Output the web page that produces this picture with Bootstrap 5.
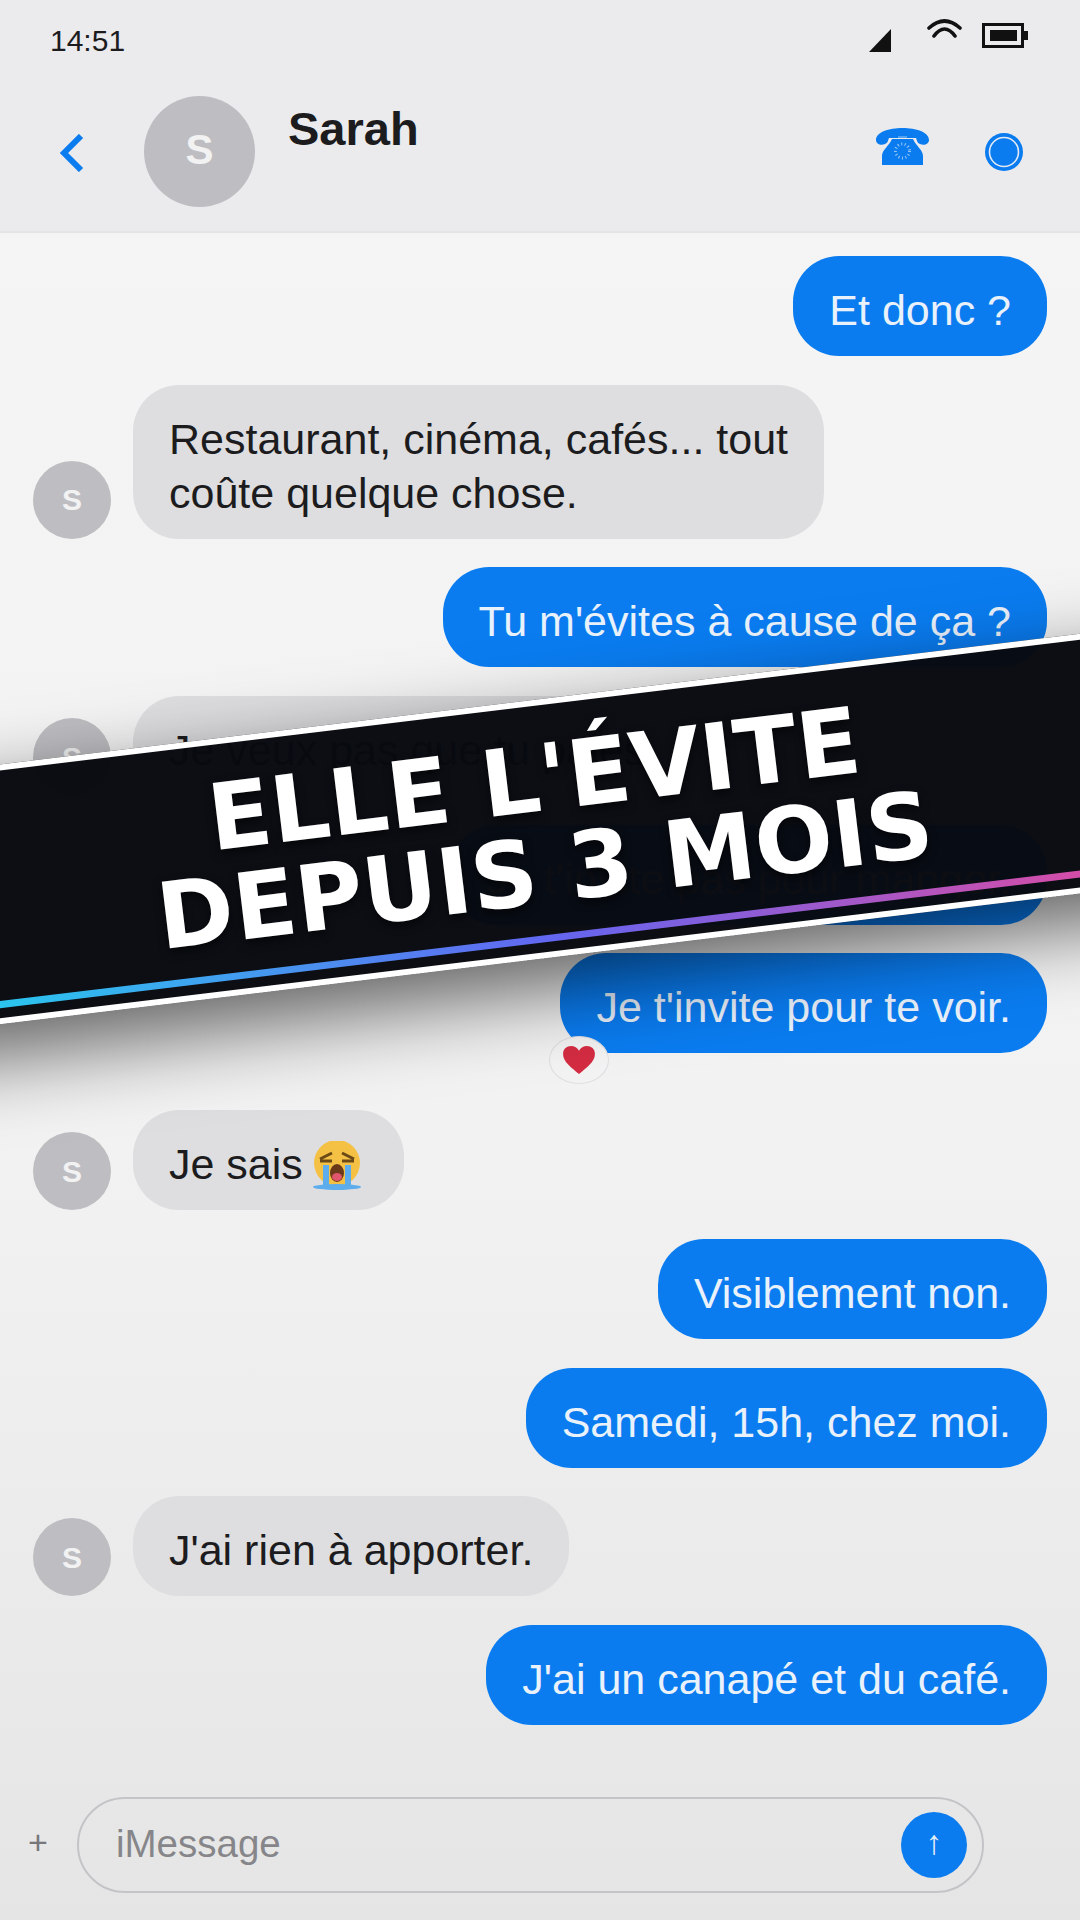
<!DOCTYPE html>
<html lang="fr">
<head>
  <meta charset="UTF-8">
  <title>Sarah</title>
  <link href="https://cdn.jsdelivr.net/npm/bootstrap@5.3.2/dist/css/bootstrap.min.css" rel="stylesheet">
  <style>
    html, body { width: 1080px; height: 1920px; overflow: hidden; }
    body { font-family: "Liberation Sans", Arial, sans-serif; color: #1c1c1e; background: #f2f2f3; }
    #phone { width: 1080px; height: 1920px; position: relative; overflow: hidden; background: linear-gradient(180deg, #f5f5f6 0%, #f2f2f2 60%, #e5e5e5 100%); }
    #top-area { height: 233px; background: #ebebed; border-bottom: 2px solid #e4e4e6; }
    #status-bar { height: 80px; padding: 0 52px 0 50px; }
    #clock { font-size: 30px; }
    .status-icons { align-self: flex-start; padding-top: 18px; }
    #sig-icon { margin-top: 11px; margin-right: 36px; }
    #wifi-icon { margin-right: 20px; }
    #batt-icon { margin-top: 5px; }
    #chat-head { height: 151px; padding: 0 57px 0 58px; }
    #back-btn { width: 86px; margin-bottom: 5px; flex: 0 0 auto; }
    #head-avatar { width: 111px; height: 111px; font-size: 42px; margin-right: 33px; margin-bottom: 9px; padding-bottom: 3px; }
    #head-name { font-size: 47px; font-weight: 700; margin-bottom: 52px; }
    #call-icon { margin-bottom: 18px; }
    #video-icon { margin-left: 55px; margin-bottom: 7px; }
    .face-round { border-radius: 50%; background: #bebec2; color: #f2f2f3; font-weight: 700; flex: 0 0 auto; }
    #chat-list { padding: 23px 33px 0 33px; gap: 28.7px; }
    .msg-bubble { font-size: 43px; line-height: 54px; padding: 27px 36px 19px; border-radius: 46px; position: relative; }
    .msg-out { background: #0a7cf0; color: #e9f1fb; margin-left: auto; margin-right: 0; }
    .msg-in { background: #dedee0; color: #1c1c1e; }
    .msg-row { gap: 22px; align-items: flex-end; }
    .msg-row .face-round { width: 78px; height: 78px; font-size: 30px; }
    .msg-gap { margin-top: 28px; }
    #heart-tag { position: absolute; left: -11px; bottom: -31px; width: 60px; height: 48px; border-radius: 50%; background: #f3f3f3; border: 1px solid #dfdfe3; }
    #cry-face { vertical-align: -12px; margin-left: -3px; margin-right: 6px; }
    #input-bar { position: absolute; left: 0; right: 0; bottom: 27px; height: 96px; padding: 0 96px 0 28px; }
    #plus-sign { font-size: 34px; color: #77777b; width: 49px; margin-bottom: 6px; }
    #input-box { height: 96px; flex: 1; border: 2px solid #c4c4c8; border-radius: 48px; padding: 0 15px 0 37px; font-size: 38.5px; color: #86868a; }
    #input-box span { margin-bottom: 3px; }
    #send-btn { width: 66px; height: 66px; border-radius: 50%; background: #0a7cf0; color: #e8eef6; font-size: 34px; line-height: 1; padding-bottom: 6px; }
    #banner { position: absolute; left: -100px; top: 700px; width: 1280px; height: 258px; transform: rotate(-6.9deg); background: rgba(8, 10, 16, .985); border-top: 6px solid #fff; border-bottom: 6px solid #fff; box-shadow: 0 30px 80px rgba(0, 0, 0, .6); }
    #banner-text { font-family: "DejaVu Sans", sans-serif; font-weight: 700; font-size: 92px; line-height: 92px; color: #fff; text-shadow: 0 4px 10px rgba(0, 0, 0, .6); height: 229px; padding-top: 10px; }
    #banner-line { height: 7px; background: linear-gradient(90deg, #22d3ee, #6366f1, #ec4899); }
  </style>
</head>
<body>
<div id="phone">
  <div id="top-area">
    <div id="status-bar" class="d-flex align-items-center justify-content-between">
      <div id="clock">14:51</div>
      <div class="status-icons d-flex align-items-start">
        <svg id="sig-icon" width="22" height="23" viewBox="0 0 22 23"><path d="M22 0V23H0Z" fill="#111"/></svg>
        <svg id="wifi-icon" width="35" height="20" viewBox="0 0 35 20" fill="none" stroke="#111" stroke-width="3.600" stroke-linecap="round"><path d="M2 10Q17.500 -4 33 10"/><path d="M7 18Q17.500 4 28 18"/></svg>
        <svg id="batt-icon" width="46" height="25" viewBox="0 0 46 25" fill="#111"><rect x="1.500" y="1.500" width="39" height="22" fill="none" stroke="#111" stroke-width="3"/><rect x="8" y="7" width="27" height="11"/><rect x="42" y="8" width="4" height="9"/></svg>
      </div>
    </div>
    <div id="chat-head" class="d-flex align-items-center">
      <div id="back-btn">
        <svg width="26" height="38" viewBox="0 0 26 38" fill="none" stroke="#0a7cf0" stroke-width="6"><path d="M23 2L6 19L23 36"/></svg>
      </div>
      <div id="head-avatar" class="face-round d-flex align-items-center justify-content-center">S</div>
      <div id="head-name">Sarah</div>
      <svg id="call-icon" class="ms-auto" width="55" height="37" viewBox="0 0 55 37">
        <path d="M1 12C1 4 14 0 27.500 0C41 0 54 4 54 12C54 16 49 18 45 16C42 15 42 12 41 10H14C13 12 13 15 10 16C6 18 1 16 1 12Z" fill="#0a7cf0"/>
        <path d="M7 37V28C7 22 14 18 17 11H38C41 18 48 22 48 28V37Z" fill="#0a7cf0"/>
        <circle cx="27.500" cy="23" r="7" fill="none" stroke="#9cc8f5" stroke-width="3" stroke-dasharray="1 2.500"/>
        <path d="M23 9H32" stroke="#9cc8f5" stroke-width="1"/>
      </svg>
      <svg id="video-icon" width="38" height="38" viewBox="0 0 38 38">
        <circle cx="19" cy="19" r="19" fill="#0a7cf0"/>
        <circle cx="19" cy="19" r="14.500" fill="#0a7cf0" stroke="#e3e9f2" stroke-width="1.600"/>
      </svg>
    </div>
  </div>

  <div id="chat-list" class="d-flex flex-column">
    <div class="msg-bubble msg-out">Et donc ?</div>
    <div class="msg-row d-flex">
      <div class="face-round d-flex align-items-center justify-content-center">S</div>
      <div class="msg-bubble msg-in">Restaurant, cinéma, cafés... tout<br>coûte quelque chose.</div>
    </div>
    <div class="msg-bubble msg-out">Tu m'évites à cause de ça ?</div>
    <div class="msg-row d-flex">
      <div class="face-round d-flex align-items-center justify-content-center">S</div>
      <div class="msg-bubble msg-in">Je veux pas que tu paies.</div>
    </div>
    <div class="msg-bubble msg-out">Je t'invite pas pour manger.</div>
    <div class="msg-bubble msg-out">Je t'invite pour te voir.
      <div id="heart-tag" class="d-flex align-items-center justify-content-center">
        <svg width="34" height="30" viewBox="0 0 36 32"><path d="M18 31C10 24 1 18 1 9.500C1 4 5 1 9.500 1C13 1 16.500 3 18 6C19.500 3 23 1 26.500 1C31 1 35 4 35 9.500C35 18 26 24 18 31Z" fill="#d42c42"/></svg>
      </div>
    </div>
    <div class="msg-row msg-gap d-flex">
      <div class="face-round d-flex align-items-center justify-content-center">S</div>
      <div class="msg-bubble msg-in">Je sais
        <svg id="cry-face" width="50" height="50" viewBox="0 0 50 50">
          <circle cx="25" cy="22" r="23" fill="#f4c144"/>
          <path d="M8 18L20 12M8 20H20M42 18L30 12M42 20H30" stroke="#6b4a18" stroke-width="3" fill="none"/>
          <rect x="11" y="24" width="6" height="22" fill="#5dadec"/>
          <rect x="33" y="24" width="6" height="22" fill="#5dadec"/>
          <ellipse cx="25" cy="32" rx="7" ry="9" fill="#6b3a18"/>
          <ellipse cx="25" cy="36" rx="5" ry="4" fill="#e0566c"/>
          <ellipse cx="25" cy="46" rx="24" ry="3" fill="#5dadec"/>
        </svg>
      </div>
    </div>
    <div class="msg-bubble msg-out">Visiblement non.</div>
    <div class="msg-bubble msg-out">Samedi, 15h, chez moi.</div>
    <div class="msg-row d-flex">
      <div class="face-round d-flex align-items-center justify-content-center">S</div>
      <div class="msg-bubble msg-in">J'ai rien à apporter.</div>
    </div>
    <div class="msg-bubble msg-out">J'ai un canapé et du café.</div>
  </div>

  <div id="input-bar" class="d-flex align-items-center">
    <div id="plus-sign">+</div>
    <div id="input-box" class="d-flex align-items-center justify-content-between">
      <span>iMessage</span>
      <div id="send-btn" class="d-flex align-items-center justify-content-center">↑</div>
    </div>
  </div>

  <div id="banner">
    <div id="banner-text" class="d-flex flex-column align-items-center justify-content-center">
      <div>ELLE L'ÉVITE</div>
      <div>DEPUIS 3 MOIS</div>
    </div>
    <div id="banner-line"></div>
  </div>
</div>
<script src="https://cdn.jsdelivr.net/npm/bootstrap@5.3.2/dist/js/bootstrap.bundle.min.js"></script>
</body>
</html>
